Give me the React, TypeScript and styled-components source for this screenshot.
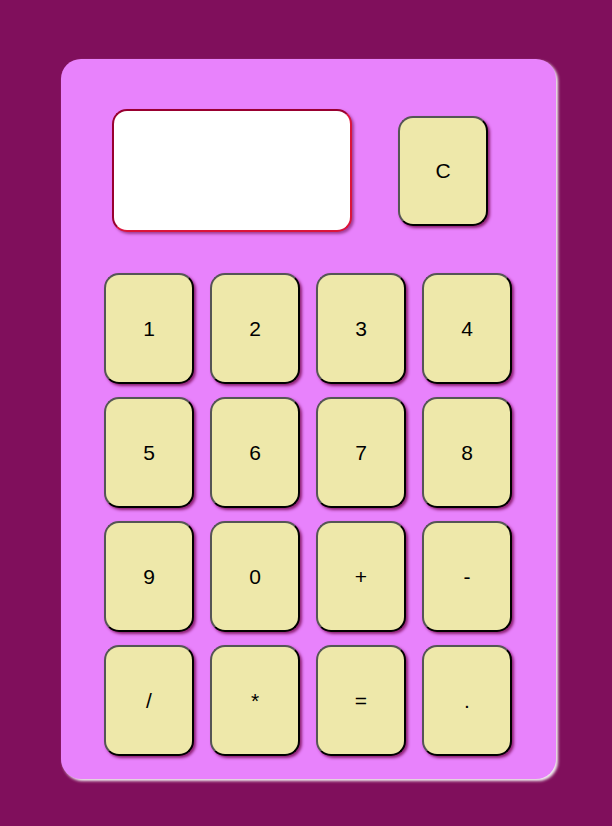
import React from 'react';
import styled, { createGlobalStyle } from 'styled-components';

const GlobalStyle = createGlobalStyle`
  html, body {
    margin: 0;
    padding: 0;
    background: #800f5c;
    font-family: "Liberation Sans", Arial, sans-serif;
  }
`;

const Page = styled.div`
  padding: 59px 0 46px 61px;
`;

const Body = styled.div`
  width: 495px;
  height: 720px;
  box-sizing: border-box;
  background: #e882fc;
  border-radius: 20px;
  box-shadow: 2px 2px 3px #f4f4f4;
  padding: 50px 0 0 43px;
`;

const TopRow = styled.div`
  display: flex;
  align-items: flex-start;
  margin-bottom: 41px;
`;

const Screen = styled.div`
  width: 240px;
  height: 123px;
  box-sizing: border-box;
  margin-left: 8px;
  margin-right: 46px;
  background: #fff;
  border: 2px solid;
  border-color: #990030 #dc143c #dc143c #990030;
  border-radius: 15px;
  box-shadow: 2px 2px 3px #a23d96;
`;

const Key = styled.button<{ $top?: number }>`
  width: 90px;
  height: 111px;
  box-sizing: border-box;
  margin-top: ${p => p.$top ?? 0}px;
  background: #eee8aa;
  border: 2px solid;
  border-color: #555 #000 #000 #555;
  border-radius: 15px;
  box-shadow: 2px 2px 3px #8c1f72;
  font-family: "Liberation Sans", Arial, sans-serif;
  font-size: 21px;
  color: #000;
  padding: 0;
  display: flex;
  align-items: center;
  justify-content: center;
`;

const Keys = styled.div`
  display: grid;
  grid-template-columns: repeat(4, 90px);
  grid-auto-rows: 111px;
  column-gap: 16px;
  row-gap: 13px;
`;

const labels = ['1', '2', '3', '4', '5', '6', '7', '8', '9', '0', '+', '-', '/', '*', '=', '.'];

export default function App() {
  return (
    <>
      <GlobalStyle />
      <Page>
        <Body>
          <TopRow>
            <Screen />
            <Key $top={7} style={{ height: 110 }}>C</Key>
          </TopRow>
          <Keys>
            {labels.map(l => (
              <Key key={l}>{l}</Key>
            ))}
          </Keys>
        </Body>
      </Page>
    </>
  );
}
